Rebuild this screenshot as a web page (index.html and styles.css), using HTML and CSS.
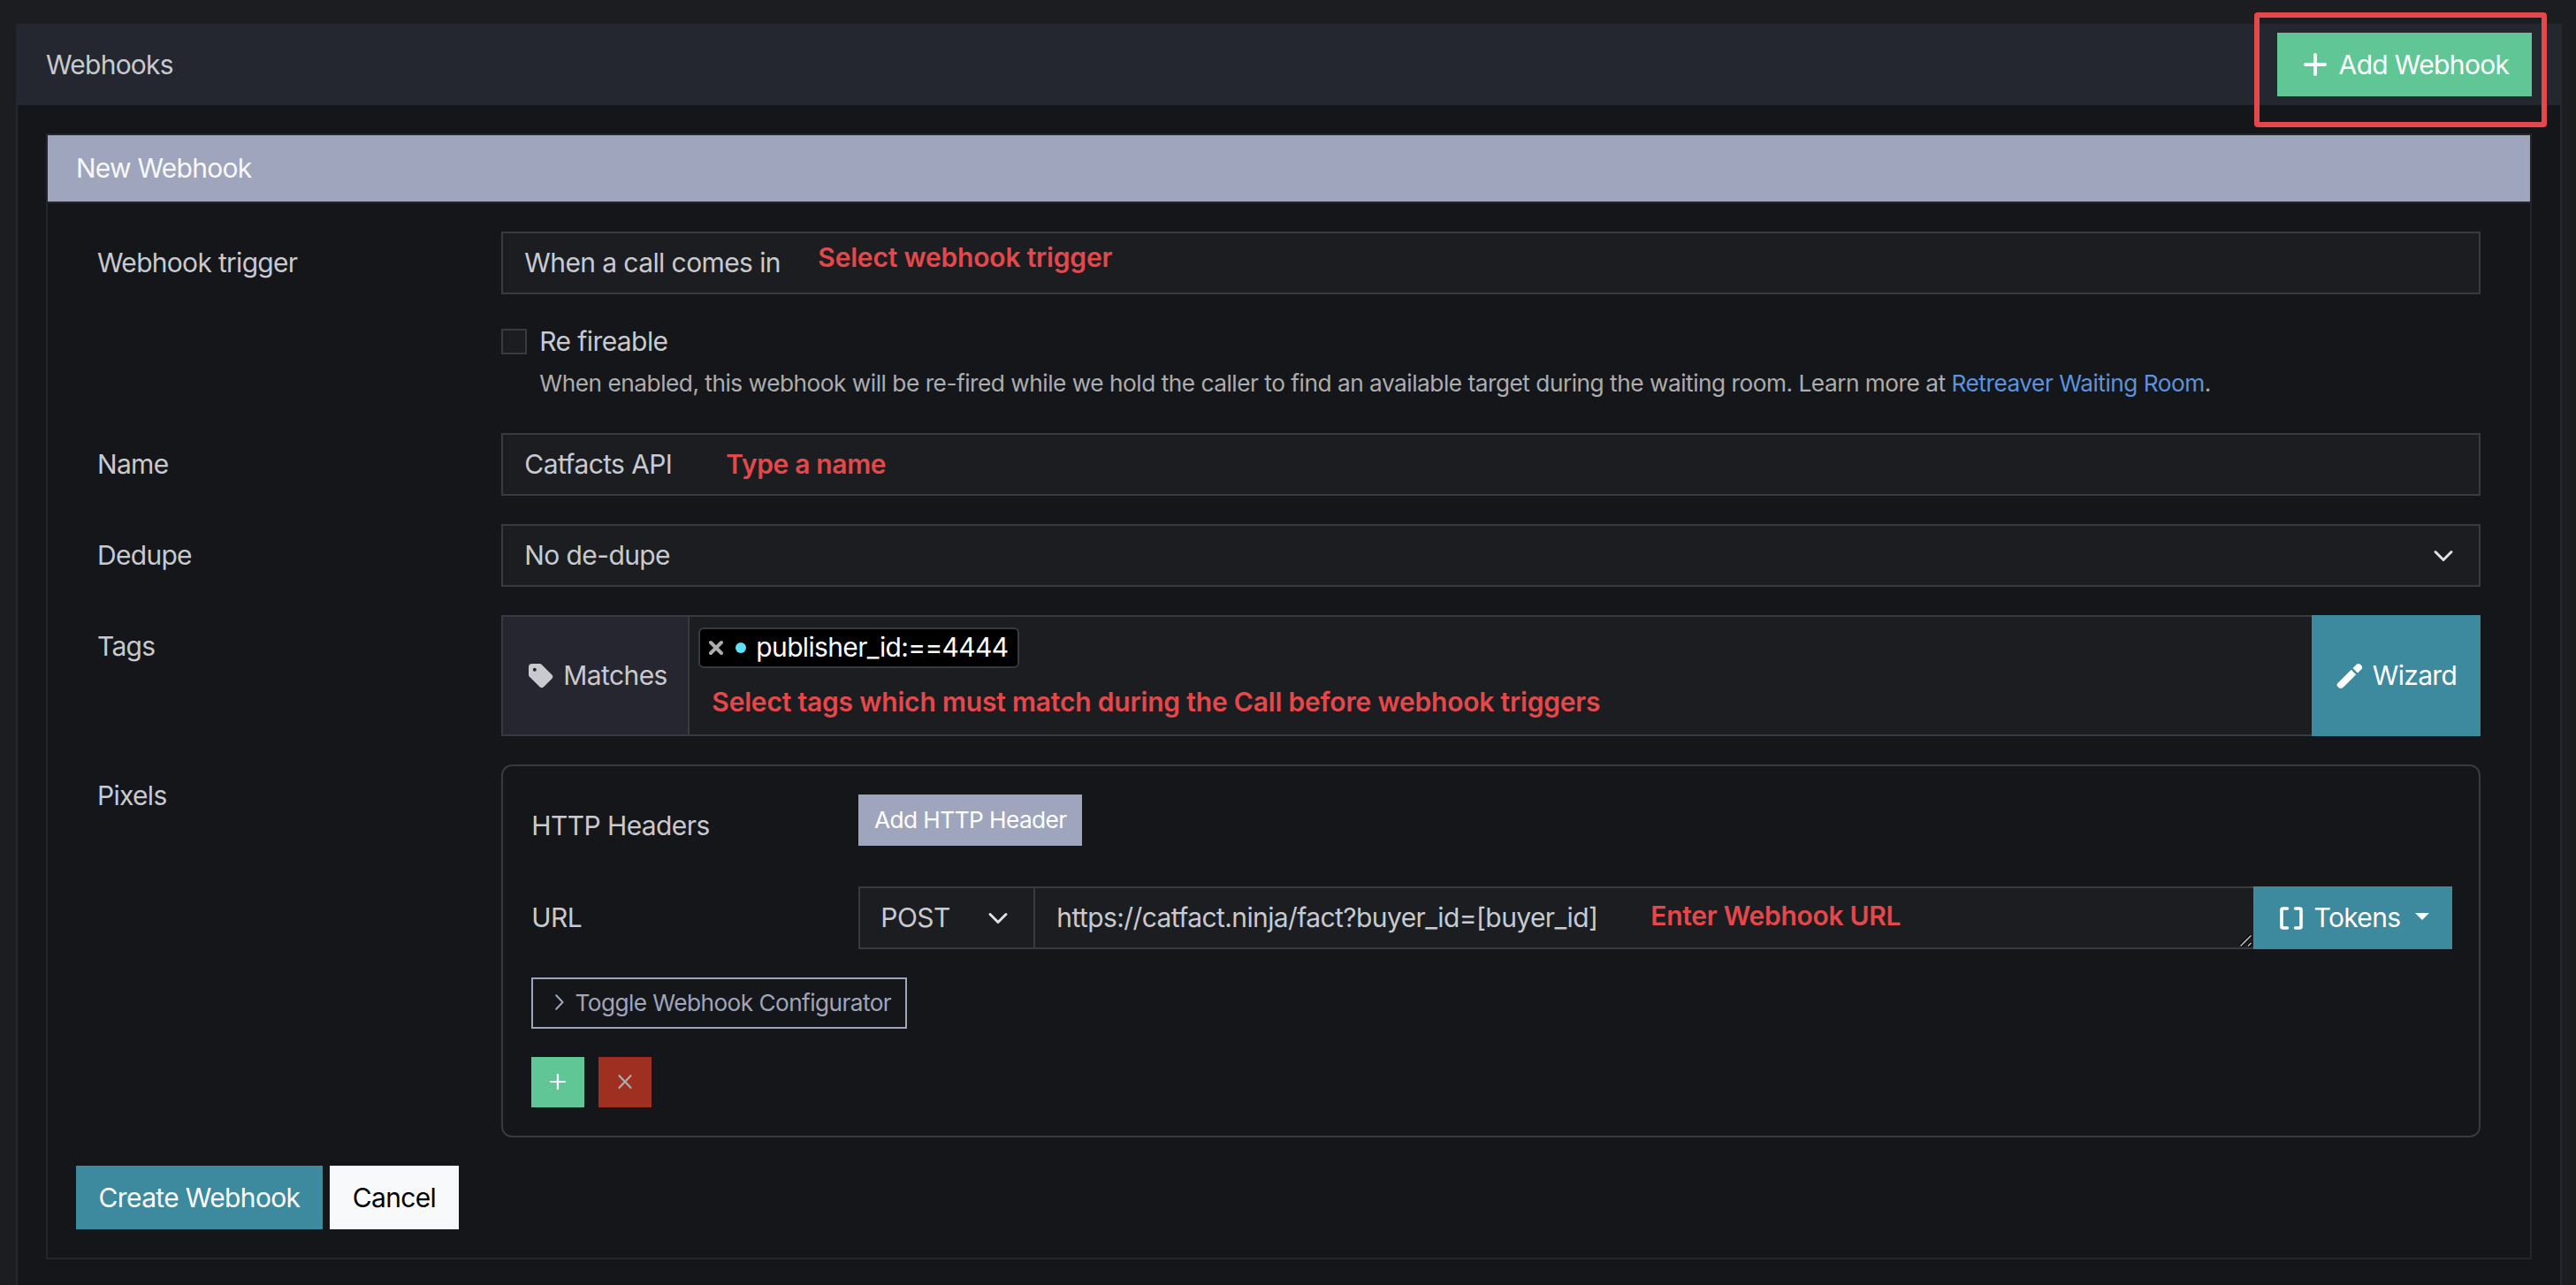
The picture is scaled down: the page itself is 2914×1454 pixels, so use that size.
FILE: index.html
```html
<!DOCTYPE html>
<html lang="en">
<head>
    <meta charset="UTF-8">
    <meta name="viewport" content="width=device-width, initial-scale=1.0">
    <title>Webhooks</title>
    <link rel="stylesheet" href="styles.css">
</head>
<body>
    <div class="card">
        <div class="card-header">
            <span>Webhooks</span>
            <div class="add-wrap">
                <button class="btn btn-success btn-add">
                    <svg class="icon-plus" width="26" height="26" viewBox="0 0 26 26"><path d="M13 2v22M2 13h22" stroke="currentColor" stroke-width="3.8" stroke-linecap="round"/></svg>
                    <span>Add Webhook</span>
                </button>
                <div class="highlight"></div>
            </div>
        </div>

        <div class="card-body">
            <div class="form-card">
                <div class="form-header">New Webhook</div>
                <div class="form-body">
                    <div class="form-row">
                        <label class="form-label">Webhook trigger</label>
                        <div class="form-field">
                            <div class="form-control">
                                <span>When a call comes in</span>
                                <span class="note note-trigger">Select webhook trigger</span>
                            </div>
                            <div class="form-check">
                                <span class="check-box"></span>
                                <span>Re fireable</span>
                            </div>
                            <p class="help-text">When enabled, this webhook will be re-fired while we hold the caller to find an available target during the waiting room. Learn more at <a href="#">Retreaver Waiting Room</a>.</p>
                        </div>
                    </div>

                    <div class="form-row">
                        <label class="form-label">Name</label>
                        <div class="form-field">
                            <div class="form-control">
                                <span>Catfacts API</span>
                                <span class="note note-name">Type a name</span>
                            </div>
                        </div>
                    </div>

                    <div class="form-row">
                        <label class="form-label">Dedupe</label>
                        <div class="form-field">
                            <div class="form-control form-select">
                                <span>No de-dupe</span>
                                <svg class="chevron" width="24" height="24" viewBox="0 0 16 16"><path d="m2 5 6 6 6-6" fill="none" stroke="currentColor" stroke-width="2" stroke-linecap="round" stroke-linejoin="round"/></svg>
                            </div>
                        </div>
                    </div>

                    <div class="form-row">
                        <label class="form-label">Tags</label>
                        <div class="form-field">
                            <div class="tag-group">
                                <div class="tag-addon">
                                    <svg width="28" height="28" viewBox="0 0 28 28"><path fill="currentColor" fill-rule="evenodd" d="M4 0H12c1.300 0 2.200.4 3 1.200L26.300 12.500c1.400 1.400 1.400 3 0 4.400L17 26.300c-1.400 1.400-3 1.400-4.400 0L1.200 15C.4 14.200 0 13.300 0 12V4C0 1.400 1.400 0 4 0ZM6.800 4.800a2 2 0 1 0 0 4 2 2 0 0 0 0-4Z"/></svg>
                                    <span>Matches</span>
                                </div>
                                <div class="tag-input">
                                    <div class="tag">
                                        <svg width="16" height="18" viewBox="0 0 16 18"><path d="m2 3 12 12M14 3 2 15" stroke="currentColor" stroke-width="4" stroke-linecap="round"/></svg>
                                        <span class="tag-dot"></span>
                                        <span>publisher_id:==4444</span>
                                    </div>
                                    <span class="note note-tags">Select tags which must match during the Call before webhook triggers</span>
                                </div>
                                <button class="btn btn-info btn-wizard">
                                    <svg width="30" height="30" viewBox="0 0 30 30"><path fill="currentColor" d="M16.700 7.800 22.200 13.300 8.200 27.300Q5 30.500 2.500 28L1.500 27Q-.5 25 1.500 23ZM18.500 6 22.800 1.700Q25 0 27.500 2.300 30.500 5 28.300 7.200L24 11.500Z"/></svg>
                                    <span>Wizard</span>
                                </button>
                            </div>
                        </div>
                    </div>

                    <div class="form-row">
                        <label class="form-label">Pixels</label>
                        <div class="form-field">
                            <div class="pixel-box">
                                <div class="pixel-row pixel-headers">
                                    <label>HTTP Headers</label>
                                    <button class="btn btn-sm btn-secondary">Add HTTP Header</button>
                                </div>
                                <div class="pixel-row pixel-url">
                                    <label>URL</label>
                                    <div class="url-group">
                                        <div class="method-select">
                                            <span>POST</span>
                                            <svg class="chevron" width="24" height="24" viewBox="0 0 16 16"><path d="m2 5 6 6 6-6" fill="none" stroke="currentColor" stroke-width="2" stroke-linecap="round" stroke-linejoin="round"/></svg>
                                        </div>
                                        <div class="url-input">
                                            <span>https://catfact.ninja/fact?buyer_id=[buyer_id]</span>
                                            <span class="note note-url">Enter Webhook URL</span>
                                            <svg class="resize-grip" width="15" height="15" viewBox="0 0 15 15"><path d="M1.500 13.500l12-12M10 13.500l3.500-3.500" stroke="#000" stroke-width="4"/><path d="M1.500 13.500l12-12M10 13.500l3.500-3.500" stroke="#b9b9ba" stroke-width="1.600"/></svg>
                                        </div>
                                        <button class="btn btn-info btn-tokens">
                                            <svg width="26" height="26" viewBox="0 0 26 26"><path d="M8.500 2H3.500Q2 2 2 3.500v19Q2 24 3.500 24h5M17.500 2h5Q24 2 24 3.500v19Q24 24 22.500 24h-5" fill="none" stroke="currentColor" stroke-width="3.600" stroke-linecap="round"/></svg>
                                            <span>Tokens</span>
                                            <span class="caret"></span>
                                        </button>
                                    </div>
                                </div>
                                <button class="btn btn-sm btn-outline">
                                    <svg width="10" height="18" viewBox="0 0 10 18"><path d="m1.200 1.200 7.300 7.800-7.300 7.800" fill="none" stroke="currentColor" stroke-width="2" stroke-linecap="round" stroke-linejoin="round"/></svg>
                                    <span>Toggle Webhook Configurator</span>
                                </button>
                                <div class="pixel-actions">
                                    <button class="btn btn-sm btn-success btn-square">
                                        <svg width="18" height="18" viewBox="0 0 18 18"><path d="M9 1v16M1 9h16" stroke="currentColor" stroke-width="2.200" stroke-linecap="round"/></svg>
                                    </button>
                                    <button class="btn btn-sm btn-danger btn-square">
                                        <svg width="18" height="18" viewBox="0 0 18 18"><path d="m2.500 2.200 13 13.600M15.500 2.200l-13 13.600" stroke="currentColor" stroke-width="2.200" stroke-linecap="round"/></svg>
                                    </button>
                                </div>
                            </div>
                        </div>
                    </div>

                    <div class="form-actions">
                        <button class="btn btn-info btn-create">Create Webhook</button>
                        <button class="btn btn-light btn-cancel">Cancel</button>
                    </div>
                </div>
            </div>
        </div>
    </div>
</body>
</html>
```
FILE: styles.css
```css
* {
    box-sizing: border-box;
}
body {
    margin: 0;
    padding: 27px 16px 0 18px;
    height: 1454px;
    background: #1c1d20;
    color: #c8cad0;
    font-family: Inter, "Liberation Sans", sans-serif;
    font-size: 30px;
    line-height: 45px;
    letter-spacing: -0.6px;
}
svg {
    display: block;
    flex: none;
}
.card {
    height: 100%;
    border: 2px solid #24272f;
    border-bottom: 0;
    background: #15161a;
}
.card-header {
    display: flex;
    align-items: center;
    justify-content: space-between;
    height: 90px;
    padding: 0 32px 2px;
    background: #24272f;
    letter-spacing: -0.75px;
}
.card-body {
    padding: 32px 32px 0;
}
.form-card {
    border: 2px solid #24252d;
}
.form-header {
    height: 77px;
    padding: 15px 32px;
    border-bottom: 2px solid #24272f;
    background: #9ea5bd;
    color: #f8f9fb;
    letter-spacing: -0.75px;
}
.form-body {
    padding: 32px;
}
.form-row {
    display: grid;
    grid-template-columns: 1fr 5fr;
    margin-bottom: 32px;
}
.form-label {
    padding: 13px 24px;
    letter-spacing: -0.7px;
}
.form-field {
    padding: 0 24px;
    min-width: 0;
}
.form-control {
    position: relative;
    display: flex;
    align-items: center;
    height: 71px;
    padding: 0 24px;
    border: 2px solid #363a43;
    background: #1c1d20;
}
.form-select {
    justify-content: space-between;
    padding-right: 28px;
}
.chevron {
    color: #dee2e6;
}
.form-check {
    display: flex;
    align-items: center;
    gap: 14px;
    height: 45px;
    margin-top: 31px;
}
.check-box {
    width: 29px;
    height: 29px;
    border: 2px solid #363a43;
    background: #1c1d20;
}
.help-text {
    height: 39px;
    margin: 5px 0 5px 43px;
    font-size: 26.25px;
    line-height: 39px;
    letter-spacing: -0.49px;
    color: #acadaf;
    white-space: nowrap;
}
.help-text a {
    color: #5b93dc;
    text-decoration: none;
}

/* red walkthrough notes on top of the form */
.note {
    position: absolute;
    color: #e5484b;
    font-weight: 600;
    letter-spacing: -0.19px;
    white-space: nowrap;
}
.note-trigger {
    left: 356px;
    top: 5px;
}
.note-name {
    left: 252px;
    top: 11px;
    letter-spacing: -0.35px;
}
.note-tags {
    left: 25px;
    top: 74px;
}
.note-url {
    left: 696px;
    top: 9px;
    letter-spacing: -0.28px;
}
.add-wrap {
    position: relative;
}
.highlight {
    position: absolute;
    left: -26px;
    top: -23px;
    width: 331px;
    height: 130px;
    border: 6px solid #e5484b;
    border-radius: 4px;
}

.btn {
    display: flex;
    align-items: center;
    justify-content: center;
    padding: 0;
    border: 0;
    color: #fff;
    font-family: inherit;
    font-size: 30px;
    line-height: 45px;
    letter-spacing: -0.65px;
    white-space: nowrap;
}
.btn-success {
    background: #61c695;
}
.btn-info {
    background: #3d8a9e;
}
.btn-secondary {
    background: #9ea5bd;
}
.btn-light {
    background: #f8f9fb;
    color: #000;
}
.btn-danger {
    background: #9f2f21;
    color: #acadaf;
}
.btn-outline {
    border: 2px solid #9ea5bd;
    background: none;
    color: #9ea5bd;
}
.btn-sm {
    height: 58px;
    font-size: 26.25px;
    line-height: 39px;
    letter-spacing: -0.58px;
}
.btn-add {
    width: 288px;
    height: 72px;
    padding-left: 4px;
    gap: 14px;
}

.tag-group {
    display: flex;
    height: 137px;
}
.tag-addon {
    display: flex;
    align-items: center;
    gap: 11px;
    width: 213px;
    padding-left: 29px;
    border: 2px solid #363a43;
    background: #262630;
}
.tag-input {
    position: relative;
    flex: 1;
    padding: 12px 10px;
    border: 2px solid #363a43;
    border-width: 2px 0;
    background: #1c1d20;
}
.tag {
    display: flex;
    align-items: center;
    width: 363px;
    height: 46px;
    padding: 0 0 1px 10px;
    border: 2px solid #363a43;
    border-radius: 6px;
    background: #000;
    color: #fff;
    letter-spacing: -0.65px;
    white-space: nowrap;
}
.tag svg {
    color: #acadaf;
}
.tag-dot {
    width: 12px;
    height: 12px;
    margin: 0 11px 0 14px;
    border-radius: 50%;
    background: #5fe0fb;
}
.btn-wizard {
    width: 191px;
    padding-left: 1px;
    gap: 11px;
}

.pixel-box {
    height: 422px;
    padding: 32px 30px 32px 32px;
    border: 2px solid #363a43;
    border-radius: 12px;
}
.pixel-row {
    display: grid;
    grid-template-columns: 370px 1fr;
}
.pixel-row label {
    padding-top: 13px;
}
.pixel-headers {
    height: 72px;
    margin-bottom: 32px;
}
.pixel-headers .btn {
    width: 253px;
    padding-bottom: 2px;
}
.pixel-url {
    margin-bottom: 32px;
}
.url-group {
    display: flex;
    height: 71px;
}
.method-select {
    display: flex;
    align-items: center;
    justify-content: space-between;
    width: 200px;
    padding: 0 28px 0 23px;
    border: 2px solid #363a43;
    background: #1c1d20;
}
.url-input {
    position: relative;
    flex: 1;
    display: flex;
    align-items: center;
    padding-left: 24px;
    border: 2px solid #363a43;
    border-width: 2px 0;
    background: #1c1d20;
}
.resize-grip {
    position: absolute;
    right: 1px;
    bottom: 0;
}
.btn-tokens {
    width: 225px;
    padding-left: 4px;
    gap: 13px;
}
.caret {
    margin: 0 0 4px 4px;
    border-top: 8px solid #fff;
    border-left: 8px solid transparent;
    border-right: 8px solid transparent;
}
.btn-outline {
    width: 425px;
    gap: 13px;
    padding: 0 0 2px 8px;
}
.pixel-actions {
    display: flex;
    gap: 16px;
    margin-top: 32px;
}
.btn-square {
    width: 60px;
    height: 57px;
    padding-bottom: 2px;
}

.form-actions {
    display: flex;
    gap: 8px;
}
.btn-create {
    width: 279px;
    height: 72px;
}
.btn-cancel {
    width: 146px;
    height: 72px;
}
```
